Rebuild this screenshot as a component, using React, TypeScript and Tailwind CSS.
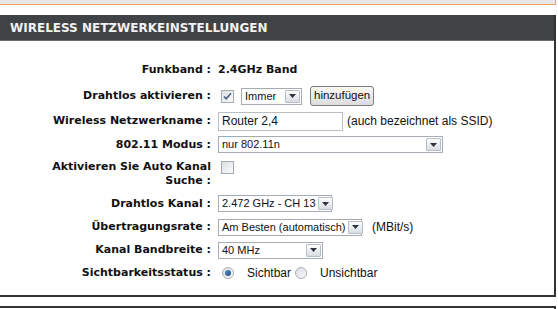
import type { ReactNode } from "react";

const LABEL = "font-['DejaVu_Sans',Verdana,sans-serif] font-bold text-[11px] text-[#111] text-right leading-[14px]";
const VALUE = "font-['Liberation_Sans',Tahoma,sans-serif] text-[12px] text-[#111]";

function Arrow() {
  return (
    <span className="ml-auto mr-px flex h-[13px] w-[15px] shrink-0 items-center justify-center rounded-[1px] border border-[#b7bec7] bg-gradient-to-b from-[#fdfdfd] to-[#d9dde3]">
      <svg width="7" height="4" viewBox="0 0 7 4">
        <path d="M0 0h7L3.5 4z" fill="#2c3440" />
      </svg>
    </span>
  );
}

function Select({ text, w }: { text: string; w: string }) {
  return (
    <div className={`flex h-[17px] items-center border border-[#a6acb3] bg-white ${w}`}>
      <span className="pl-[3px] pr-[2px] font-['Liberation_Sans',Tahoma,sans-serif] text-[11px] leading-none text-[#111] whitespace-nowrap">
        {text}
      </span>
      <Arrow />
    </div>
  );
}

function Checkbox({ checked }: { checked?: boolean }) {
  return (
    <span className="flex h-[13px] w-[13px] items-center justify-center border border-[#a5abb3] bg-gradient-to-br from-[#dcdfe3] to-[#fbfbfb]">
      {checked && (
        <svg width="9" height="9" viewBox="0 0 9 9">
          <path d="M1 4.5l2.2 2.3L8 1.2" fill="none" stroke="#4a5e86" strokeWidth="1.6" />
        </svg>
      )}
    </span>
  );
}

function Radio({ checked }: { checked?: boolean }) {
  return (
    <span className="flex h-[12px] w-[12px] items-center justify-center rounded-full border border-[#a9b0b8] bg-gradient-to-br from-[#d8dce1] to-[#fafafa]">
      {checked && <span className="h-[6px] w-[6px] rounded-full bg-gradient-to-br from-[#5a8fc4] to-[#1d4f86]" />}
    </span>
  );
}

function Row({ label, h, children, top }: { label: ReactNode; h: string; children: ReactNode; top?: boolean }) {
  return (
    <div className={`flex ${h} ${top ? "items-start pt-[4px]" : "items-center"}`}>
      <div className={`w-[211px] shrink-0 ${LABEL}`}>{label}</div>
      <div className="ml-[7px] flex items-center">{children}</div>
    </div>
  );
}

export default function App() {
  return (
    <div className="h-[309px] w-[558px] overflow-hidden bg-white">
      <div className="h-[5px] w-[556px] border-r border-b border-[#f0a458] bg-[#e7e7e7]" />
      <div className="h-[10px]" />
      <div className="w-[556px] border-r-2 border-b-2 border-[#333]">
        <div className="flex h-[26px] items-center border-b border-[#6a6d6f] bg-[#404345] pl-[10px] font-['DejaVu_Sans',Verdana,sans-serif] text-[12px] font-bold text-[#f2f2f2]">
          WIRELESS NETZWERKEINSTELLUNGEN
        </div>
        <div className="pt-[16px] pb-[10px]">
          <Row label="Funkband :" h="h-[26px]">
            <span className="font-['DejaVu_Sans',Verdana,sans-serif] text-[11px] font-bold text-[#111]">2.4GHz Band</span>
          </Row>
          <Row label="Drahtlos aktivieren :" h="h-[26px]">
            <span className="ml-[3px]"><Checkbox checked /></span>
            <span className="ml-[7px]"><Select text="Immer" w="w-[61px]" /></span>
            <button className="ml-[8px] h-[20px] rounded-[3px] border border-[#7b7b7b] bg-gradient-to-b from-[#f8f8f8] to-[#dcdcdc] px-[3px] font-['Liberation_Sans',Tahoma,sans-serif] text-[11.5px] leading-none text-[#111]">
              hinzufügen
            </button>
          </Row>
          <Row label="Wireless Netzwerkname :" h="h-[24px]">
            <div className="flex h-[19px] w-[125px] items-center border border-[#b9bec4] bg-white pl-[3px]">
              <span className={VALUE}>Router 2,4</span>
            </div>
            <span className={`ml-[4px] ${VALUE}`}>(auch bezeichnet als SSID)</span>
          </Row>
          <Row label="802.11 Modus :" h="h-[23px]">
            <Select text="nur 802.11n" w="w-[225px]" />
          </Row>
          <Row label={<>Aktivieren Sie Auto Kanal<br />Suche :</>} h="h-[36px]" top>
            <span className="ml-[3px] mt-[1px]"><Checkbox /></span>
          </Row>
          <Row label="Drahtlos Kanal :" h="h-[23px]">
            <Select text="2.472 GHz - CH 13" w="w-[114px]" />
          </Row>
          <Row label="Übertragungsrate :" h="h-[24px]">
            <Select text="Am Besten (automatisch)" w="w-[144px]" />
            <span className={`ml-[10px] ${VALUE}`}>(MBit/s)</span>
          </Row>
          <Row label="Kanal Bandbreite :" h="h-[22px]">
            <Select text="40 MHz" w="w-[105px]" />
          </Row>
          <Row label="Sichtbarkeitsstatus :" h="h-[24px]">
            <span className="ml-[4px]"><Radio checked /></span>
            <span className={`ml-[13px] ${VALUE}`}>Sichtbar</span>
            <span className="ml-[4px]"><Radio /></span>
            <span className={`ml-[13px] ${VALUE}`}>Unsichtbar</span>
          </Row>
        </div>
      </div>
      <div className="h-[9px]" />
      <div className="h-[10px] w-[556px] border-t-2 border-r-2 border-[#333]" />
    </div>
  );
}
